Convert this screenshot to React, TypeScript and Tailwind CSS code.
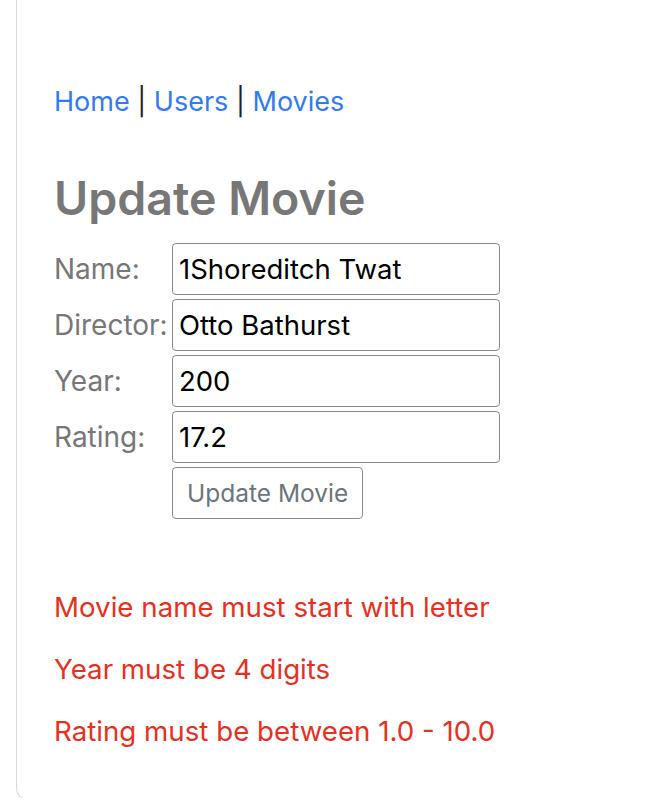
export default function App() {
    const fields = [
        { label: 'Name:', value: '1Shoreditch Twat' },
        { label: 'Director:', value: 'Otto Bathurst' },
        { label: 'Year:', value: '200' },
        { label: 'Rating:', value: '17.2' },
    ];
    const errors = ['Movie name must start with letter', 'Year must be 4 digits', 'Rating must be between 1.0 - 10.0'];

    return (
        <div className="min-h-screen bg-white pl-4 font-['Inter',sans-serif]">
            <div className="h-[800px] rounded-bl-xl border-l border-b border-[#d9d9d9] pl-[37px] pt-[84px]">
                <nav className="text-[27px] leading-[36px] text-[#222]">
                    <a className="text-[#2f7bf5]">Home</a> | <a className="text-[#2f7bf5]">Users</a> |{' '}
                    <a className="text-[#2f7bf5]">Movies</a>
                </nav>

                <h1 className="mt-[48px] text-[46.5px] font-semibold leading-[60px] text-[#777]">Update Movie</h1>

                <div className="mt-[15px] grid grid-cols-[118px_328px] gap-y-1">
                    {fields.map((f) => (
                        <div key={f.label} className="contents">
                            <label className="flex items-center text-[28px] text-[#777]">{f.label}</label>
                            <input
                                defaultValue={f.value}
                                className="h-[52px] rounded-[4px] border border-[#8a8a8a] px-[6px] text-[27.5px] text-black outline-none"
                            />
                        </div>
                    ))}
                    <div />
                    <div>
                        <button className="h-[52px] rounded-[4px] border border-[#8a8a8a] px-[14px] text-[24.5px] text-[#6c757d]">
                            Update Movie
                        </button>
                    </div>
                </div>

                <div className="mt-[70px] flex flex-col gap-[26px]">
                    {errors.map((e) => (
                        <p key={e} className="text-[27.7px] leading-[36px] text-[#e8301f]">
                            {e}
                        </p>
                    ))}
                </div>
            </div>
        </div>
    );
}
